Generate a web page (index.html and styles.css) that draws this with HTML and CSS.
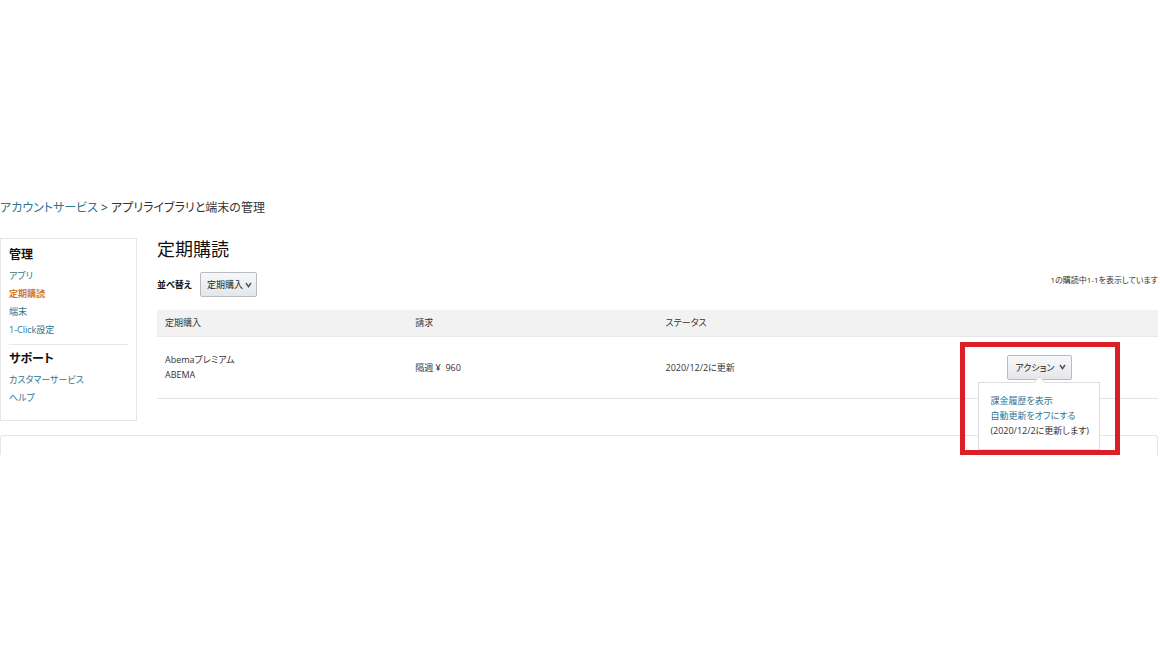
FILE: index.html
```html
<!DOCTYPE html>
<html lang="ja">
<head>
	<meta charset="utf-8">
	<title>アプリライブラリと端末の管理</title>
	<meta name="viewport" content="width=device-width, initial-scale=1.0">
	<link rel="stylesheet" href="styles.css">
</head>
<body>

<nav class="breadcrumb">
	<a href="#">アカウントサービス</a> &gt; <span>アプリライブラリと端末の管理</span>
</nav>

<div class="columns">
	<aside class="sidebar">
		<h2>管理</h2>
		<ul>
			<li><a href="#">アプリ</a></li>
			<li><a class="current" href="#">定期購読</a></li>
			<li><a href="#">端末</a></li>
			<li><a href="#">1-Click設定</a></li>
		</ul>
		<hr>
		<h2>サポート</h2>
		<ul>
			<li><a href="#">カスタマーサービス</a></li>
			<li><a href="#">ヘルプ</a></li>
		</ul>
	</aside>

	<main class="main">
		<h1>定期購読</h1>
		<div class="toolbar">
			<label for="sort">並べ替え</label>
			<div class="select-wrap">
				<select id="sort" class="btn">
					<option>定期購入</option>
				</select>
				<svg class="arrow" viewBox="0 0 7 6"><path d="M1 1l2.5 3.6L6 1"/></svg>
			</div>
			<span class="count">1の購読中1-1を表示しています</span>
		</div>

		<table class="subs">
			<thead>
				<tr>
					<th>定期購入</th>
					<th>請求</th>
					<th>ステータス</th>
					<th></th>
				</tr>
			</thead>
			<tbody>
				<tr>
					<td>Abemaプレミアム<br>ABEMA</td>
					<td>隔週 ¥&nbsp; 960</td>
					<td>2020/12/2に更新</td>
					<td class="action-cell">
						<div class="action">
							<button type="button" class="btn">アクション
								<svg class="arrow" viewBox="0 0 7 6"><path d="M1 1l2.5 3.6L6 1"/></svg>
							</button>
							<div class="menu">
								<a href="#">課金履歴を表示</a>
								<a href="#">自動更新をオフにする</a>
								<span>(2020/12/2に更新します)</span>
							</div>
							<div class="highlight"></div>
						</div>
					</td>
				</tr>
			</tbody>
		</table>
	</main>
</div>

<div class="next-box"></div>

</body>
</html>
```

FILE: styles.css
```css
* { box-sizing: border-box; }

body {
	margin: 0;
	padding: 199px 2px 0 0;
	background: #fff;
	color: #333;
	font-family: "Open Sans", "Noto Sans CJK JP", sans-serif;
	font-size: 9px;
	line-height: 15px;
	font-feature-settings: "palt";
}

a { color: #2f7391; text-decoration: none; }
h1, h2, ul { margin: 0; padding: 0; }
ul { list-style: none; }

.breadcrumb {
	font-size: 12px;
	line-height: 18px;
}

.columns {
	display: flex;
	align-items: flex-start;
	gap: 20px;
	margin-top: 21px;
}

/* left menu */
.sidebar {
	flex: 0 0 137px;
	padding: 7px 8px 13px;
	border: 1px solid #e6e6e6;
}
.sidebar h2 {
	color: #111;
	font-size: 12px;
	font-weight: bold;
	line-height: 18px;
	margin-bottom: 3px;
}
.sidebar li { line-height: 18px; }
.sidebar hr {
	margin: 5px 0;
	border: 0;
	border-top: 1px solid #e7e7e7;
}
.sidebar .current { color: #d27a2c; font-weight: bold; }

.main { flex: 1; }
.main h1 {
	color: #111;
	font-size: 18px;
	font-weight: normal;
	line-height: 22px;
}

.toolbar {
	display: flex;
	align-items: center;
	gap: 8px;
	margin: 12px 0 13px;
}
.toolbar label { color: #111; font-weight: bold; }
.count {
	margin-left: auto;
	align-self: flex-start;
	font-size: 8px;
}

/* grey buttons */
.btn {
	display: block;
	height: 25px;
	padding: 0 8px;
	border: 1px solid #b9bbc0;
	border-radius: 2px;
	background: linear-gradient(#f7f8fa, #e4e6ea);
	color: #222;
	font: inherit;
	white-space: nowrap;
	appearance: none;
}
.arrow {
	width: 7px;
	height: 6px;
	fill: none;
	stroke: #555;
	stroke-width: 1.5;
}
.select-wrap { position: relative; }
.select-wrap .btn { width: 57px; padding: 0 6px; }
.select-wrap .arrow {
	position: absolute;
	right: 5px;
	top: 10px;
	pointer-events: none;
}

.subs {
	width: 100%;
	table-layout: fixed;
	border-collapse: collapse;
}
.subs th {
	height: 26px;
	padding: 0 8px;
	background: #f2f2f2;
	border-bottom: 1px solid #e9e9e9;
	font-weight: normal;
	text-align: left;
}
.subs td {
	height: 62px;
	padding: 0 8px;
	border-bottom: 1px solid #e4e4e4;
}
.subs .action-cell { padding: 0 0 0 14px; }

.action {
	position: relative;
	width: 65px;
	margin: 0 auto;
}
.action .btn {
	display: flex;
	align-items: center;
	justify-content: space-between;
	width: 100%;
	padding: 0 5px 0 7px;
}
.menu {
	position: absolute;
	left: -29px;
	top: 27px;
	width: 122px;
	height: 68px;
	padding: 10px 11px;
	border: 1px solid #ddd;
	background: #fff;
	white-space: nowrap;
}
.menu a, .menu span { display: block; }
.menu::before {
	content: "";
	position: absolute;
	left: 56px;
	top: -5px;
	width: 8px;
	height: 8px;
	border: 1px solid #ddd;
	border-width: 1px 0 0 1px;
	background: #fff;
	transform: rotate(45deg);
}
.highlight {
	position: absolute;
	left: -47px;
	top: -13px;
	width: 160px;
	height: 113px;
	border: 5px solid #dc1f26;
	pointer-events: none;
}

.next-box {
	height: 20px;
	margin-top: 14px;
	border: 1px solid #e6e6e6;
	border-bottom: 0;
	border-radius: 3px 3px 0 0;
}
```
